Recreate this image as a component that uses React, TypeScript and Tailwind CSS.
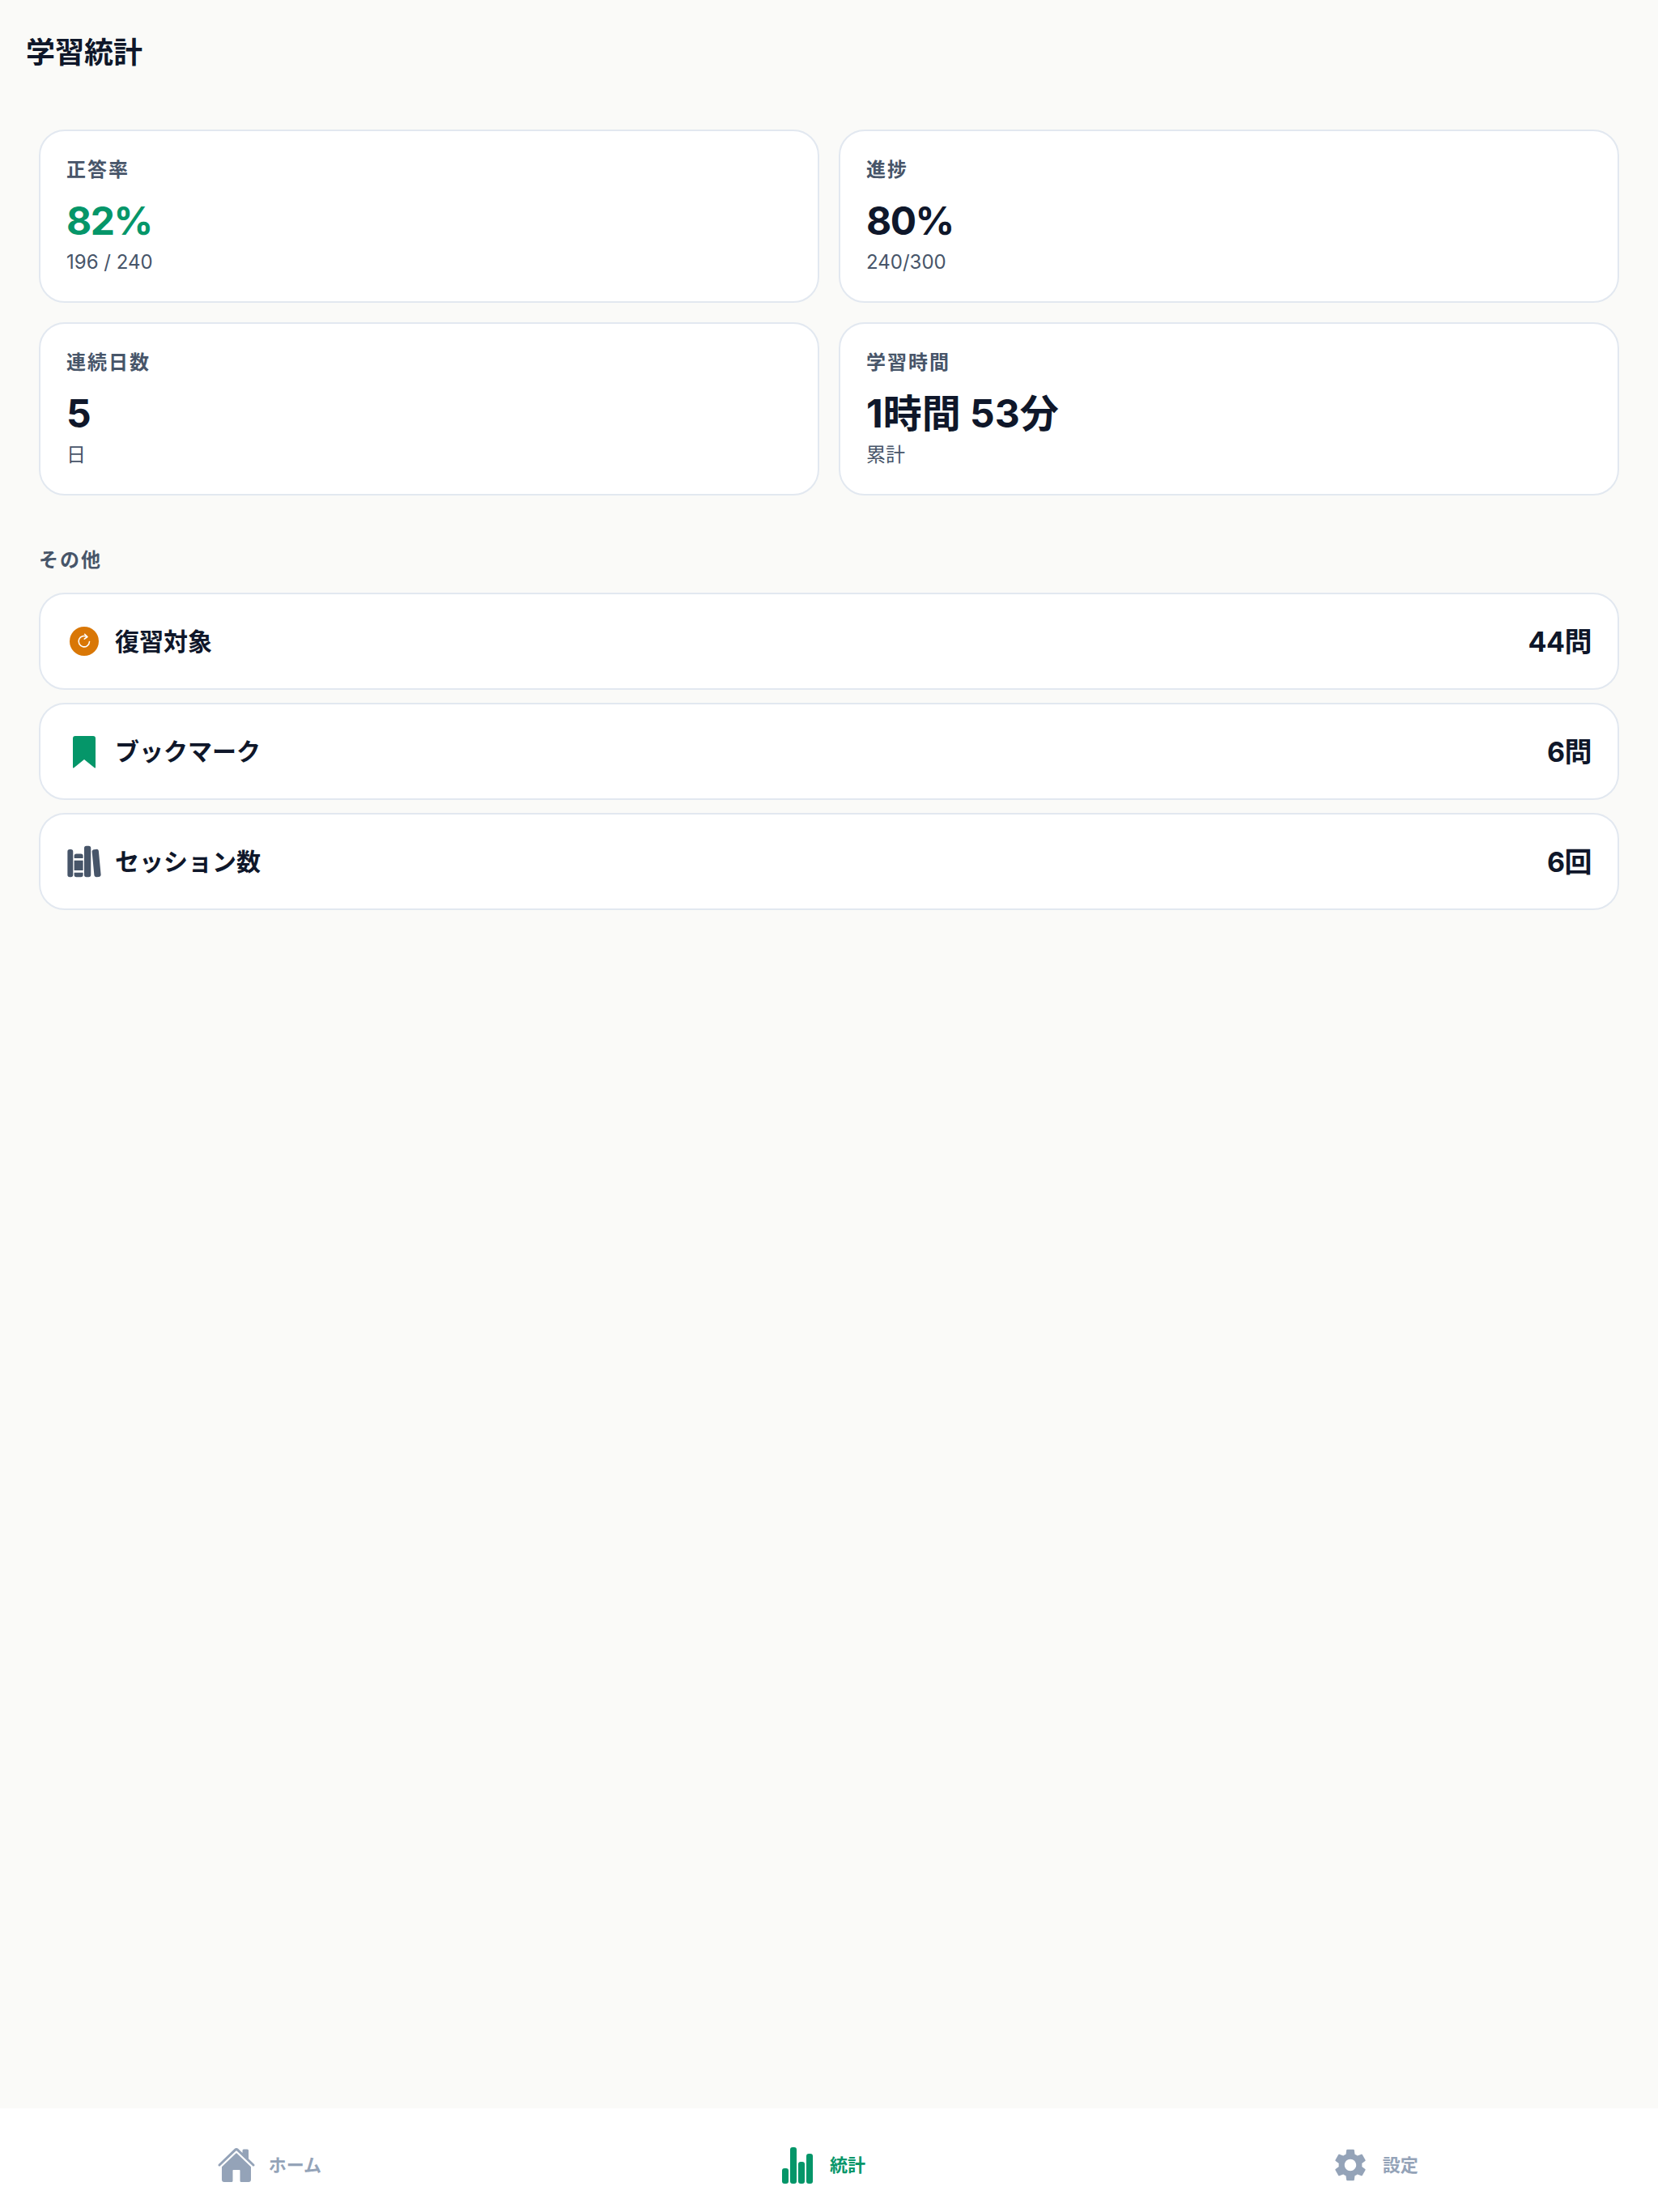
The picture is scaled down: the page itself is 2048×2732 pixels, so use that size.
import React from 'react';
import { IoHome, IoLibrary } from 'react-icons/io5';
import { MdSettings } from 'react-icons/md';

const font = "font-['Inter','Noto_Sans_CJK_JP',sans-serif]";

const stats = [
  { id: 'accuracy', label: '正答率', value: '82%', sub: '196 / 240', green: true, tight: true },
  { id: 'progress', label: '進捗', value: '80%', sub: '240/300', tight: true },
  { id: 'streak', label: '連続日数', value: '5', sub: '日' },
  { id: 'time', label: '学習時間', value: '1時間 53分', sub: '累計' }
];

const ReviewIcon = () => <svg width="36" height="36" viewBox="0 0 36 36" fill="none">
    <circle cx="18" cy="18" r="18" fill="#d97706" />
    <path d="M24.5 18.5a6.7 6.7 0 1 1-3-5.9" stroke="#fff" strokeWidth="1.6" strokeLinecap="round" />
    <path d="M18.6 9.3l3.3 3.2-3.6 2.7" stroke="#fff" strokeWidth="1.6" strokeLinecap="round" strokeLinejoin="round" />
  </svg>;

const BookmarkIcon = () => <svg width="28" height="40" viewBox="0 0 28 40" className="mt-[2px]">
    <path d="M3 0h22a3 3 0 0 1 3 3v36a.6.6 0 0 1-1 .4L14 29 1 39.4a.6.6 0 0 1-1-.4V3a3 3 0 0 1 3-3z" fill="#059669" />
  </svg>;

const BarsIcon = () => <svg width="38" height="45" viewBox="0 0 38 45" fill="#059669">
    <rect x="0" y="26" width="8" height="19" rx="3" />
    <rect x="10" y="0" width="8" height="45" rx="3" />
    <rect x="20" y="18" width="8" height="27" rx="3" />
    <rect x="30" y="8" width="8" height="37" rx="3" />
  </svg>;

const rows = [
  { id: 'review', label: '復習対象', value: '44問', icon: <ReviewIcon /> },
  { id: 'bookmark', label: 'ブックマーク', value: '6問', icon: <BookmarkIcon /> },
  { id: 'session', label: 'セッション数', value: '6回', icon: <IoLibrary size={46} className="text-[#475569]" /> }
];

const tabs = [
  { id: 'home', label: 'ホーム', active: false, icon: <IoHome size={48} /> },
  { id: 'stats', label: '統計', active: true, icon: <BarsIcon /> },
  { id: 'settings', label: '設定', active: false, icon: <MdSettings size={52} /> }
];

export default function App() {
  return <div className={`${font} min-h-[2732px] flex flex-col bg-[#fafaf8]`}>
      <main className="flex-1">
        <header className="pt-[41px] px-8">
          <h1 className="text-[36px] leading-[48px] font-bold text-[#0f172a]">学習統計</h1>
        </header>
        <div className="px-12 mt-[71px]">
          <div className="grid grid-cols-2 gap-6">
            {stats.map(stat => <div key={stat.id} className="bg-white border-2 border-[#e2e8f0] rounded-[32px] px-8 pt-[33px] h-[214px]">
                <div className="text-[24px] tracking-[2px] leading-[30px] font-bold text-[#475569]">{stat.label}</div>
                <div className={`mt-4 text-[48px] leading-[64px] font-[750] ${stat.tight ? 'tracking-[-1.5px]' : ''} ${stat.green ? 'text-[#059669]' : 'text-[#0f172a]'}`}>{stat.value}</div>
                <div className="mt-[3px] text-[24px] leading-[32px] text-[#475569]">{stat.sub}</div>
              </div>)}
          </div>
          <h2 className="mt-[65px] mb-[25px] text-[24px] tracking-[2px] leading-[30px] font-bold text-[#475569]">その他</h2>
          <div className="flex flex-col gap-4">
            {rows.map(row => <div key={row.id} className="h-[120px] flex items-center justify-between bg-white border-2 border-[#e2e8f0] rounded-[32px] px-8">
                <div className="flex items-center gap-4">
                  <span className="w-11 flex justify-center">{row.icon}</span>
                  <span className="text-[30px] font-bold text-[#0f172a]">{row.label}</span>
                </div>
                <span className="text-[34px] tracking-[-0.5px] font-bold text-[#0f172a]">{row.value}</span>
              </div>)}
          </div>
        </div>
      </main>
      <nav className="h-[128px] bg-white flex">
        {tabs.map(tab => <div key={tab.id} className={`flex-1 flex items-center justify-center gap-4 pt-3 pr-[18px] ${tab.active ? 'text-[#059669]' : 'text-[#94a3b8]'}`}>
            <span className="w-12 flex justify-center">{tab.icon}</span>
            <span className="text-[22px] font-bold">{tab.label}</span>
          </div>)}
      </nav>
    </div>;
}
